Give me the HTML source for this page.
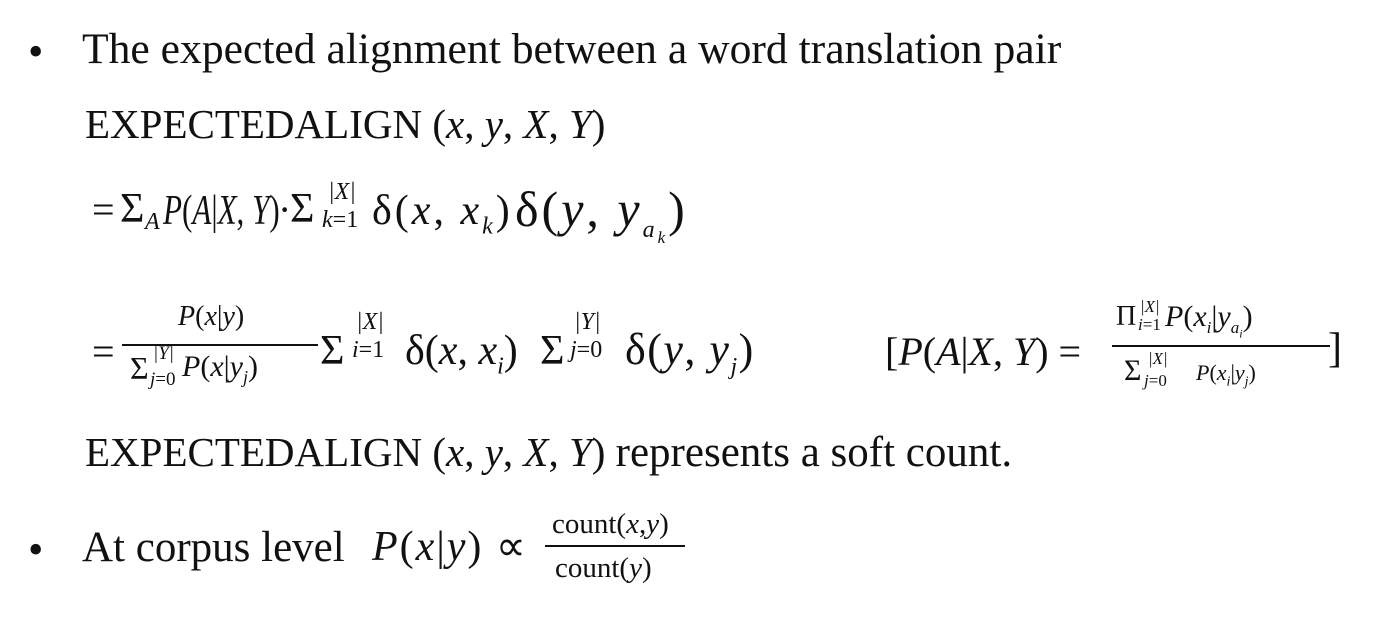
<!DOCTYPE html>
<html><head><meta charset="utf-8"><style>
body{margin:0;width:1377px;height:640px;background:#fff;position:relative;overflow:hidden;font-family:"Liberation Serif",serif;color:#111}
.a{position:absolute;white-space:nowrap;line-height:1}
i{font-style:italic}
.s{font-size:24px}
</style></head><body>
<div class="a" style="left:28px;top:30px;font-size:44px">•</div>
<div class="a" style="left:82px;top:28px;font-size:43.6px">The expected alignment between a word translation pair</div>
<div class="a" style="left:85px;top:104px;font-size:41px">EXPECTEDALIGN (<i>x</i>, <i>y</i>, <i>X</i>, <i>Y</i>)</div>

<div class="a" style="left:92px;top:190px;font-size:40px">=</div>
<div class="a" style="left:120px;top:188px;font-size:42px">Σ</div>
<div class="a" style="left:145px;top:210px;font-size:24px"><i>A</i></div>
<div class="a" style="left:163px;top:190px;font-size:42px;transform:scaleX(0.74);transform-origin:left"><i>P</i>(<i>A</i>|<i>X</i>, <i>Y</i>)</div>
<div class="a" style="left:278px;top:190px;font-size:40px">·</div>
<div class="a" style="left:290px;top:188px;font-size:42px">Σ</div>
<div class="a" style="left:328px;top:180px;font-size:24px"><i>|X|</i></div>
<div class="a" style="left:322px;top:208px;font-size:24px"><i>k</i>=1</div>
<div class="a" style="left:372px;top:190px;font-size:42px;letter-spacing:3px">δ(<i>x</i>, <i>x<sub class="s">k</sub></i>)</div>
<div class="a" style="left:515px;top:184px;font-size:50px;letter-spacing:3px">δ(<i>y</i>, <i>y<sub class="s">a<sub style="font-size:17px">k</sub></sub></i>)</div>

<div class="a" style="left:92px;top:332px;font-size:40px">=</div>
<div class="a" style="left:178px;top:303px;font-size:28px"><i>P</i>(<i>x</i>|<i>y</i>)</div>
<div class="a" style="left:122px;top:344px;width:196px;height:2px;background:#111"></div>
<div class="a" style="left:130px;top:352px;font-size:32px">Σ</div>
<div class="a" style="left:153px;top:344px;font-size:19px"><i>|Y|</i></div>
<div class="a" style="left:150px;top:370px;font-size:19px"><i>j</i>=0</div>
<div class="a" style="left:182px;top:352px;font-size:30px"><i>P</i>(<i>x</i>|<i>y<sub style="font-size:18px">j</sub></i>)</div>
<div class="a" style="left:320px;top:330px;font-size:42px">Σ</div>
<div class="a" style="left:356px;top:310px;font-size:24px"><i>|X|</i></div>
<div class="a" style="left:352px;top:338px;font-size:24px"><i>i</i>=1</div>
<div class="a" style="left:405px;top:330px;font-size:42px">δ(<i>x</i>, <i>x<sub class="s">i</sub></i>)</div>
<div class="a" style="left:540px;top:330px;font-size:42px">Σ</div>
<div class="a" style="left:574px;top:310px;font-size:24px"><i>|Y|</i></div>
<div class="a" style="left:570px;top:338px;font-size:24px"><i>j</i>=0</div>
<div class="a" style="left:625px;top:328px;font-size:44px;letter-spacing:1.5px">δ(<i>y</i>, <i>y<sub class="s">j</sub></i>)</div>

<div class="a" style="left:885px;top:332px;font-size:40px">[<i>P</i>(<i>A</i>|<i>X</i>, <i>Y</i>) =</div>
<div class="a" style="left:1116px;top:303px;font-size:28px">Π</div>
<div class="a" style="left:1140px;top:298px;font-size:17px"><i>|X|</i></div>
<div class="a" style="left:1138px;top:316px;font-size:17px"><i>i</i>=1</div>
<div class="a" style="left:1165px;top:302px;font-size:30px"><i>P</i>(<i>x<sub style="font-size:17px">i</sub></i>|<i>y<sub style="font-size:17px">a<sub style="font-size:12px">i</sub></sub></i>)</div>
<div class="a" style="left:1112px;top:345px;width:218px;height:2px;background:#111"></div>
<div class="a" style="left:1124px;top:356px;font-size:30px">Σ</div>
<div class="a" style="left:1148px;top:350px;font-size:17px"><i>|X|</i></div>
<div class="a" style="left:1144px;top:372px;font-size:17px"><i>j</i>=0</div>
<div class="a" style="left:1196px;top:362px;font-size:22px"><i>P</i>(<i>x<sub style="font-size:14px">i</sub></i>|<i>y<sub style="font-size:14px">j</sub></i>)</div>
<div class="a" style="left:1328px;top:328px;font-size:42px">]</div>

<div class="a" style="left:85px;top:431px;font-size:41px">EXPECTEDALIGN (<i>x</i>, <i>y</i>, <i>X</i>, <i>Y</i>) <span style="font-size:43px">represents a soft count.</span></div>

<div class="a" style="left:28px;top:528px;font-size:44px">•</div>
<div class="a" style="left:82px;top:526px;font-size:43px">At corpus level</div>
<div class="a" style="left:372px;top:526px;font-size:42px;letter-spacing:2px"><i>P</i>(<i>x</i>|<i>y</i>) ∝</div>
<div class="a" style="left:552px;top:510px;font-size:29px">count(<i>x</i>,<i>y</i>)</div>
<div class="a" style="left:545px;top:545px;width:140px;height:2px;background:#111"></div>
<div class="a" style="left:555px;top:554px;font-size:29px">count(<i>y</i>)</div>
</body></html>
